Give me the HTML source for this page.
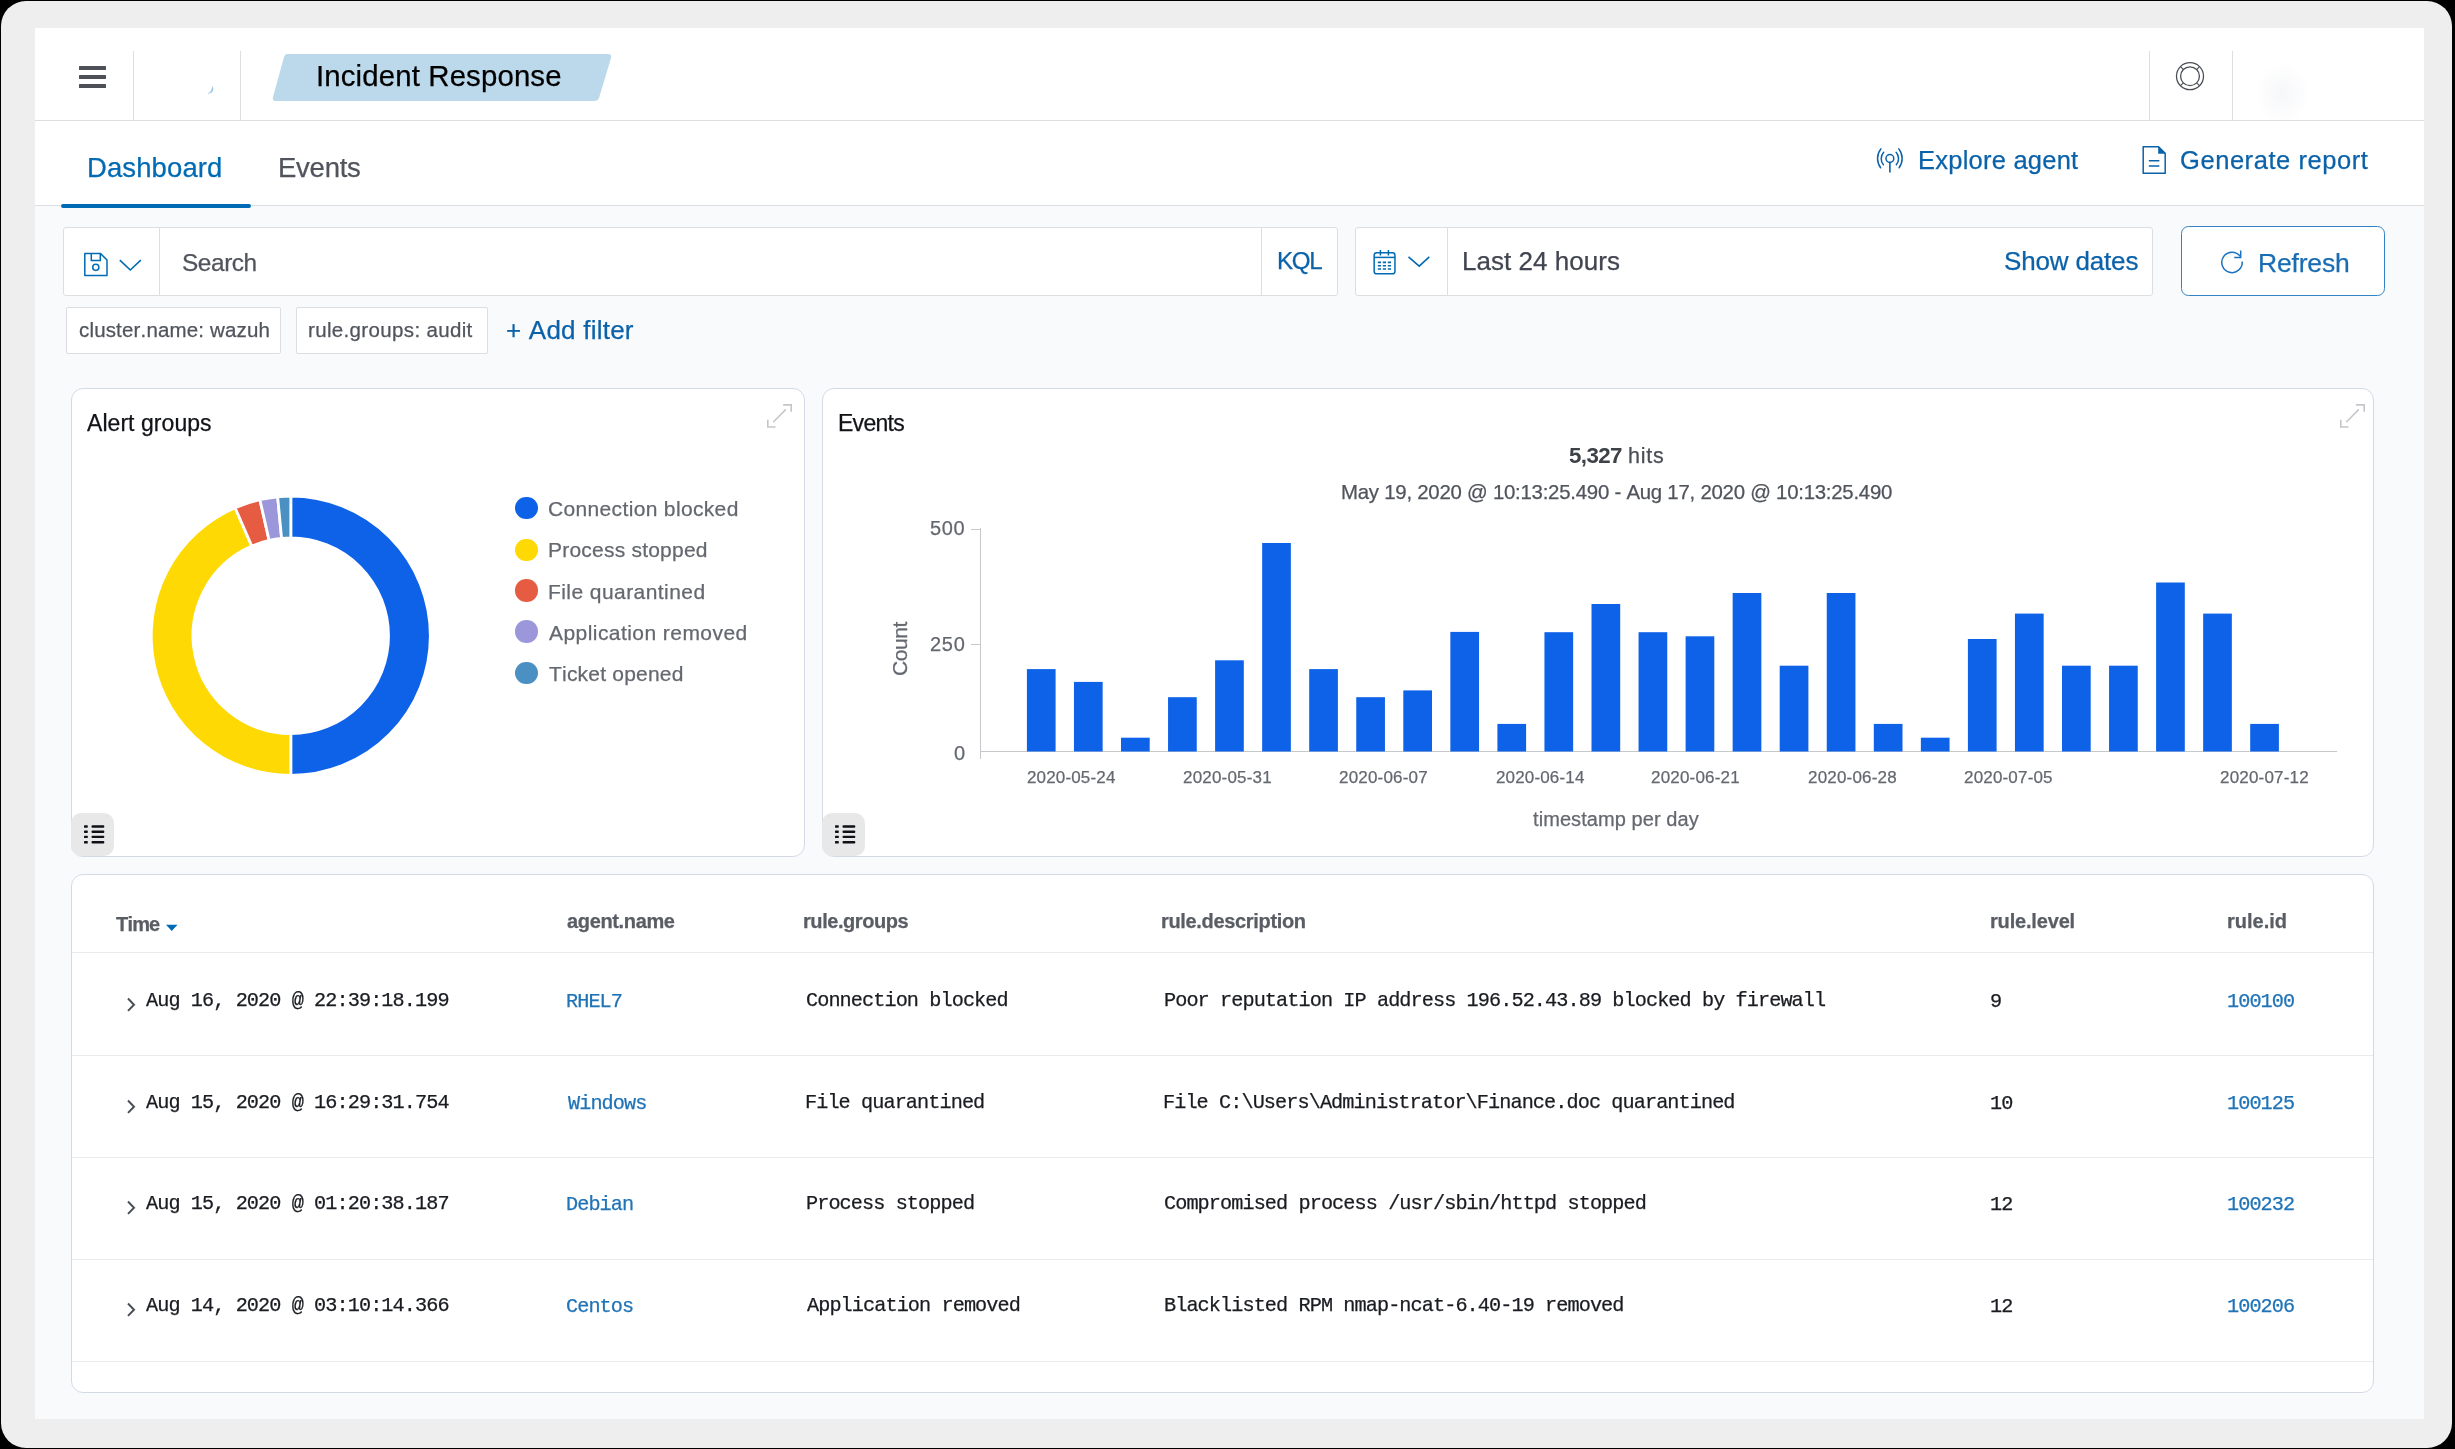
<!DOCTYPE html>
<html><head><meta charset="utf-8"><title>Wazuh - Incident Response</title><style>
html,body{margin:0;padding:0;}
body{width:2455px;height:1449px;overflow:hidden;background:#000;position:relative;
font-family:"Liberation Sans", sans-serif;font-kerning:none;}
.b{position:absolute;}
.t{position:absolute;white-space:pre;line-height:1;font-kerning:none;will-change:transform;-webkit-text-stroke:0.25px currentColor;}
.m{font-family:"Liberation Mono", monospace;font-size:20.20px;letter-spacing:-0.907px;}
svg.b{overflow:visible;}
</style></head><body>
<div class="b" style="left:1px;top:1px;width:2451px;height:1447px;background:#eeeeee;border-radius:25px;"></div>
<div class="b" style="left:35px;top:28px;width:2389px;height:1391px;background:#f9fafc;"></div>
<div class="b" style="left:35px;top:28px;width:2389px;height:178px;background:#fff;"></div>
<div class="b" style="left:35px;top:120px;width:2389px;height:1.2px;background:#dcdee1;"></div>
<div class="b" style="left:35px;top:204.6px;width:2389px;height:1.4px;background:#dcdee1;"></div>
<div class="b" style="left:132.6px;top:51px;width:1.1px;height:70px;background:#dcdee1;"></div>
<div class="b" style="left:239.6px;top:51px;width:1.1px;height:70px;background:#dcdee1;"></div>
<div class="b" style="left:2149px;top:51px;width:1.1px;height:70px;background:#dcdee1;"></div>
<div class="b" style="left:2231.6px;top:51px;width:1.1px;height:70px;background:#dcdee1;"></div>
<div class="b" style="left:2255px;top:62px;width:55px;height:58px;background:radial-gradient(ellipse at 50% 55%, rgba(236,238,242,0.45) 0%, rgba(244,245,248,0.3) 45%, rgba(255,255,255,0) 70%);"></div>
<svg class="b" style="left:204px;top:84px" width="12" height="12" viewBox="0 0 12 12"><path d="M8.3,1.8 Q10.2,4.5 8.6,7.6 Q7,9.9 3.6,9.6 Q6.8,8.2 7.6,5.2 Q8.1,3.5 8.3,1.8 Z" fill="#9fc6e6"/></svg>
<div class="b" style="left:78.8px;top:66.3px;width:27.4px;height:3.7px;background:#4d5057;border-radius:0.5px;"></div>
<div class="b" style="left:78.8px;top:75.0px;width:27.4px;height:3.7px;background:#4d5057;border-radius:0.5px;"></div>
<div class="b" style="left:78.8px;top:84.1px;width:27.4px;height:3.7px;background:#4d5057;border-radius:0.5px;"></div>
<svg class="b" style="left:0;top:0" width="700" height="130"><path d="M287,54 L608,54 Q612,54 611,58 L599,98 Q598,101 594,101 L276,101 Q272,101 273,97 L284,57 Q285,54 287,54 Z" fill="#bcd9ec"/></svg>
<div class="t" style="left:316.49px;top:61.41px;font-size:29.40px;color:#000;letter-spacing:0.131px;">Incident Response</div>
<svg class="b" style="left:2170px;top:56px" width="40" height="40" viewBox="0 0 40 40"><circle cx="20" cy="20.2" r="13.5" fill="none" stroke="#4a4e56" stroke-width="1.3"/><circle cx="20" cy="20.2" r="9.4" fill="none" stroke="#4a4e56" stroke-width="1.3"/><path d="M13.4,13.6 L10.5,10.7 M26.6,13.6 L29.5,10.7 M13.4,26.8 L10.5,29.7 M26.6,26.8 L29.5,29.7" stroke="#4a4e56" stroke-width="1.1"/></svg>
<div class="t" style="left:87.24px;top:153.52px;font-size:27.50px;color:#006bb4;letter-spacing:0.099px;">Dashboard</div>
<div class="t" style="left:277.54px;top:153.52px;font-size:27.50px;color:#50545c;letter-spacing:-0.244px;">Events</div>
<div class="b" style="left:61px;top:203.5px;width:190px;height:4px;background:#006bb4;border-radius:2px;"></div>
<svg class="b" style="left:1870px;top:140px" width="40" height="40" viewBox="0 0 40 40"><circle cx="19.9" cy="18.5" r="3.9" fill="none" stroke="#0b62a9" stroke-width="1.5"/><path d="M19.9,22.4 L19.9,32" stroke="#0b62a9" stroke-width="1.6" stroke-linecap="round"/><path d="M10.9,8.9 A15.4,15.4 0 0 0 10.6,27.7 M13.7,12.2 A9.5,9.5 0 0 0 13.4,24.7 M26.1,12.2 A9.5,9.5 0 0 1 26.3,24.7 M28.8,8.9 A15.4,15.4 0 0 1 29.1,27.7" fill="none" stroke="#0b62a9" stroke-width="1.5" stroke-linecap="round"/></svg>
<div class="t" style="left:1917.51px;top:148.21px;font-size:25.50px;color:#0b62a9;letter-spacing:0.235px;">Explore agent</div>
<svg class="b" style="left:2140px;top:144px" width="30" height="32" viewBox="0 0 30 32"><path d="M3.2,2.7 L18.5,2.7 L25.2,9.4 L25.2,29.3 L3.2,29.3 Z" fill="none" stroke="#0b62a9" stroke-width="1.5"/><path d="M18.2,2.5 L25.5,9.8 L18.2,9.8 Z" fill="#0b62a9"/><path d="M9.4,16.7 L18.8,16.7 M9.4,22.1 L18.8,22.1" stroke="#0b62a9" stroke-width="1.5" stroke-linecap="round"/></svg>
<div class="t" style="left:2180.42px;top:148.21px;font-size:25.50px;color:#0b62a9;letter-spacing:0.561px;">Generate report</div>
<div class="b" style="left:63px;top:227px;width:1275px;height:69px;background:#fff;border:1px solid #dcdee2;border-radius:3px;box-sizing:border-box;"></div>
<div class="b" style="left:159px;top:228px;width:1px;height:67px;background:#dcdee2;"></div>
<div class="b" style="left:1261px;top:228px;width:1px;height:67px;background:#dcdee2;"></div>
<svg class="b" style="left:80px;top:249px" width="32" height="32" viewBox="0 0 32 32"><path d="M4.8,4.6 L20.6,4.6 L27,11 L27,26.6 L4.8,26.6 Z" fill="none" stroke="#006bb4" stroke-width="1.5" stroke-linejoin="round"/><path d="M11.3,4.6 L11.3,11.5 L20.3,11.5 L20.3,4.6" fill="none" stroke="#006bb4" stroke-width="1.5"/><circle cx="15.8" cy="18.3" r="3.1" fill="none" stroke="#006bb4" stroke-width="1.5"/></svg>
<svg class="b" style="left:116px;top:256px" width="28" height="18" viewBox="0 0 28 18"><path d="M3.8,4.2 L14.3,14 L24.8,4.2" fill="none" stroke="#006bb4" stroke-width="1.6"/></svg>
<div class="t" style="left:181.79px;top:251.34px;font-size:24.40px;color:#50545c;letter-spacing:-0.424px;">Search</div>
<div class="t" style="left:1277.01px;top:249.31px;font-size:24.20px;color:#0b62a9;letter-spacing:-1.317px;">KQL</div>
<div class="b" style="left:1355px;top:227px;width:798px;height:69px;background:#fff;border:1px solid #dcdee2;border-radius:3px;box-sizing:border-box;"></div>
<div class="b" style="left:1447px;top:228px;width:1px;height:67px;background:#dcdee2;"></div>
<svg class="b" style="left:1370px;top:247px" width="30" height="32" viewBox="0 0 30 32"><rect x="4.15" y="5.75" width="20.8" height="21.1" rx="2.6" fill="none" stroke="#006bb4" stroke-width="1.5"/><path d="M4.15,10.4 L24.95,10.4" stroke="#006bb4" stroke-width="1.5"/><path d="M10.4,2.9 L10.4,8.5 M18.4,2.9 L18.4,8.5" stroke="#006bb4" stroke-width="1.5"/><path d="M7.8,15.4h3.2M12.8,15.4h3.2M17.8,15.4h3.2M7.8,18.8h3.2M12.8,18.8h3.2M17.8,18.8h3.2M7.8,22h3.2M12.8,22h3.2M17.8,22h3.2" stroke="#006bb4" stroke-width="1.6"/></svg>
<svg class="b" style="left:1404px;top:252px" width="30" height="20" viewBox="0 0 30 20"><path d="M4.5,4.8 L15.2,14.1 L25.3,4.8" fill="none" stroke="#006bb4" stroke-width="1.6"/></svg>
<div class="t" style="left:1462.47px;top:248.49px;font-size:26.00px;color:#404550;letter-spacing:0.044px;">Last 24 hours</div>
<div class="t" style="left:2003.52px;top:248.19px;font-size:26.00px;color:#0b62a9;letter-spacing:-0.161px;">Show dates</div>
<div class="b" style="left:2181px;top:226.3px;width:204px;height:70px;background:#fff;border:1.7px solid #3383c4;border-radius:7.5px;box-sizing:border-box;"></div>
<svg class="b" style="left:2210px;top:240px" width="40" height="40" viewBox="0 0 40 40"><path d="M32.16,21.51 A10.2,10.2 0 1 1 30.25,16.4" fill="none" stroke="#1c72bd" stroke-width="1.5"/><path d="M30.7,10.6 L30.7,17.4 L24.2,17.4" fill="none" stroke="#1c72bd" stroke-width="1.5"/></svg>
<div class="t" style="left:2258.23px;top:249.66px;font-size:26.50px;color:#1a6db3;letter-spacing:-0.182px;">Refresh</div>
<div class="b" style="left:65.5px;top:307.3px;width:215.1px;height:46.5px;background:#fff;border:1px solid #dcdee2;border-radius:2px;box-sizing:border-box;"></div>
<div class="t" style="left:78.73px;top:319.94px;font-size:20.50px;color:#50545c;letter-spacing:0.167px;">cluster.name: wazuh</div>
<div class="b" style="left:295.6px;top:307.3px;width:192.2px;height:46.5px;background:#fff;border:1px solid #dcdee2;border-radius:2px;box-sizing:border-box;"></div>
<div class="t" style="left:307.84px;top:320.44px;font-size:20.50px;color:#50545c;letter-spacing:0.347px;">rule.groups: audit</div>
<div class="t" style="left:506.23px;top:317.29px;font-size:26.00px;color:#0b62a9;letter-spacing:0.226px;">+ Add filter</div>
<div class="b" style="left:71px;top:388px;width:734px;height:469px;background:#fff;border:1.5px solid #d3dae6;border-radius:12px;box-sizing:border-box;"></div>
<div class="t" style="left:87.26px;top:412.03px;font-size:23.00px;color:#111318;letter-spacing:0.052px;">Alert groups</div>
<svg class="b" style="left:755px;top:395px" width="40" height="40" viewBox="0 0 40 40"><path d="M28.1,9.9 H36.2 V16.8 M12.8,24.8 V32.05 H20.5" fill="none" stroke="#c4c6ca" stroke-width="1.6"/><path d="M18.6,26.7 L30.4,14.9" fill="none" stroke="#c4c6ca" stroke-width="1.5" stroke-linecap="round"/></svg>
<div class="b" style="left:70.8px;top:813px;width:43.2px;height:43.3px;background:#e8e8e9;border-radius:10px;"></div>
<svg class="b" style="left:70.8px;top:813px" width="43" height="43" viewBox="0 0 43 43"><rect x="13" y="12.30" width="3.8" height="2.4" rx="0.6" fill="#0e1116"/><rect x="20.5" y="12.30" width="12.8" height="2.4" rx="1" fill="#0e1116"/><rect x="13" y="17.50" width="3.8" height="2.4" rx="0.6" fill="#0e1116"/><rect x="20.5" y="17.50" width="12.8" height="2.4" rx="1" fill="#0e1116"/><rect x="13" y="22.70" width="3.8" height="2.4" rx="0.6" fill="#0e1116"/><rect x="20.5" y="22.70" width="12.8" height="2.4" rx="1" fill="#0e1116"/><rect x="13" y="28.10" width="3.8" height="2.4" rx="0.6" fill="#0e1116"/><rect x="20.5" y="28.10" width="12.8" height="2.4" rx="1" fill="#0e1116"/></svg>
<svg class="b" style="left:0;top:0" width="820" height="860"><path d="M290.80,496.20 A139.60,139.60 0 0 1 290.80,775.40 L290.80,733.60 A97.80,97.80 0 0 0 290.80,538.00 Z" fill="#0e62e8" stroke="#fff" stroke-width="2.8"/><path d="M290.80,775.40 A139.60,139.60 0 0 1 235.13,507.78 L251.80,546.11 A97.80,97.80 0 0 0 290.80,733.60 Z" fill="#fed903" stroke="#fff" stroke-width="2.8"/><path d="M235.13,507.78 A139.60,139.60 0 0 1 259.87,499.67 L269.13,540.43 A97.80,97.80 0 0 0 251.80,546.11 Z" fill="#e65c42" stroke="#fff" stroke-width="2.8"/><path d="M259.87,499.67 A139.60,139.60 0 0 1 277.66,496.82 L281.60,538.43 A97.80,97.80 0 0 0 269.13,540.43 Z" fill="#9c96db" stroke="#fff" stroke-width="2.8"/><path d="M277.66,496.82 A139.60,139.60 0 0 1 290.80,496.20 L290.80,538.00 A97.80,97.80 0 0 0 281.60,538.43 Z" fill="#4b90c2" stroke="#fff" stroke-width="2.8"/></svg>
<div class="b" style="left:515.4000000000001px;top:496.9px;width:22.6px;height:22.6px;background:#0e62e8;border-radius:50%;"></div>
<div class="t" style="left:548.33px;top:498.12px;font-size:21.00px;color:#64686f;letter-spacing:0.345px;">Connection blocked</div>
<div class="b" style="left:515.4000000000001px;top:538.5px;width:22.6px;height:22.6px;background:#fed903;border-radius:50%;"></div>
<div class="t" style="left:547.68px;top:539.42px;font-size:21.00px;color:#64686f;letter-spacing:0.218px;">Process stopped</div>
<div class="b" style="left:515.4000000000001px;top:579.4000000000001px;width:22.6px;height:22.6px;background:#e65c42;border-radius:50%;"></div>
<div class="t" style="left:547.68px;top:580.52px;font-size:21.00px;color:#64686f;letter-spacing:0.432px;">File quarantined</div>
<div class="b" style="left:515.4000000000001px;top:620.2px;width:22.6px;height:22.6px;background:#9c96db;border-radius:50%;"></div>
<div class="t" style="left:549.36px;top:621.72px;font-size:21.00px;color:#64686f;letter-spacing:0.440px;">Application removed</div>
<div class="b" style="left:515.4000000000001px;top:661.6px;width:22.6px;height:22.6px;background:#4b90c2;border-radius:50%;"></div>
<div class="t" style="left:548.93px;top:662.62px;font-size:21.00px;color:#64686f;letter-spacing:0.209px;">Ticket opened</div>
<div class="b" style="left:822px;top:388px;width:1552px;height:469px;background:#fff;border:1.5px solid #d3dae6;border-radius:12px;box-sizing:border-box;"></div>
<div class="t" style="left:838.41px;top:411.93px;font-size:23.00px;color:#111318;letter-spacing:-0.719px;">Events</div>
<svg class="b" style="left:2327.9px;top:395px" width="40" height="40" viewBox="0 0 40 40"><path d="M28.1,9.9 H36.2 V16.8 M12.8,24.8 V32.05 H20.5" fill="none" stroke="#c4c6ca" stroke-width="1.6"/><path d="M18.6,26.7 L30.4,14.9" fill="none" stroke="#c4c6ca" stroke-width="1.5" stroke-linecap="round"/></svg>
<div class="b" style="left:821.8px;top:813px;width:43.2px;height:43.3px;background:#e8e8e9;border-radius:10px;"></div>
<svg class="b" style="left:821.8px;top:813px" width="43" height="43" viewBox="0 0 43 43"><rect x="13" y="12.30" width="3.8" height="2.4" rx="0.6" fill="#0e1116"/><rect x="20.5" y="12.30" width="12.8" height="2.4" rx="1" fill="#0e1116"/><rect x="13" y="17.50" width="3.8" height="2.4" rx="0.6" fill="#0e1116"/><rect x="20.5" y="17.50" width="12.8" height="2.4" rx="1" fill="#0e1116"/><rect x="13" y="22.70" width="3.8" height="2.4" rx="0.6" fill="#0e1116"/><rect x="20.5" y="22.70" width="12.8" height="2.4" rx="1" fill="#0e1116"/><rect x="13" y="28.10" width="3.8" height="2.4" rx="0.6" fill="#0e1116"/><rect x="20.5" y="28.10" width="12.8" height="2.4" rx="1" fill="#0e1116"/></svg>
<div class="t" style="left:1568.91px;top:445.12px;font-size:22.30px;color:#3d4148;font-weight:700;letter-spacing:-0.585px;-webkit-text-stroke:0;">5,327</div>
<div class="t" style="left:1627.81px;top:445.80px;font-size:21.50px;color:#4a4e56;letter-spacing:0.737px;">hits</div>
<div class="t" style="left:1340.53px;top:482.03px;font-size:20.40px;color:#50545c;letter-spacing:-0.246px;">May 19, 2020 @ 10:13:25.490 - Aug 17, 2020 @ 10:13:25.490</div>
<div class="b" style="left:979.5px;top:528.4px;width:1.3px;height:231px;background:#c6c8cc;"></div>
<div class="b" style="left:981px;top:750.8px;width:1356px;height:1.6px;background:#c6c8cc;"></div>
<div class="b" style="left:971px;top:528.5px;width:9px;height:1.3px;background:#c6c8cc;"></div>
<div class="b" style="left:971px;top:643.5px;width:9px;height:1.3px;background:#c6c8cc;"></div>
<div class="t" style="left:930.20px;top:518.07px;font-size:20.00px;color:#64686f;letter-spacing:0.606px;">500</div>
<div class="t" style="left:929.99px;top:634.07px;font-size:20.00px;color:#64686f;letter-spacing:0.709px;">250</div>
<div class="t" style="left:953.72px;top:743.07px;font-size:20.00px;color:#64686f;">0</div>
<div class="t" style="left:889.22px;top:676.07px;font-size:21.00px;color:#64686f;transform:rotate(-90deg);transform-origin:0 0;letter-spacing:-0.454px;">Count</div>
<svg class="b" style="left:0;top:0" width="2400" height="860"><rect x="1026.90" y="669.10" width="28.7" height="82.40" fill="#0e62e8"/><rect x="1073.95" y="681.90" width="28.7" height="69.60" fill="#0e62e8"/><rect x="1121.00" y="737.70" width="28.7" height="13.80" fill="#0e62e8"/><rect x="1168.05" y="697.20" width="28.7" height="54.30" fill="#0e62e8"/><rect x="1215.10" y="660.30" width="28.7" height="91.20" fill="#0e62e8"/><rect x="1262.15" y="543.00" width="28.7" height="208.50" fill="#0e62e8"/><rect x="1309.20" y="669.10" width="28.7" height="82.40" fill="#0e62e8"/><rect x="1356.25" y="697.20" width="28.7" height="54.30" fill="#0e62e8"/><rect x="1403.30" y="690.40" width="28.7" height="61.10" fill="#0e62e8"/><rect x="1450.35" y="631.90" width="28.7" height="119.60" fill="#0e62e8"/><rect x="1497.40" y="723.90" width="28.7" height="27.60" fill="#0e62e8"/><rect x="1544.45" y="632.20" width="28.7" height="119.30" fill="#0e62e8"/><rect x="1591.50" y="604.00" width="28.7" height="147.50" fill="#0e62e8"/><rect x="1638.55" y="632.20" width="28.7" height="119.30" fill="#0e62e8"/><rect x="1685.60" y="636.30" width="28.7" height="115.20" fill="#0e62e8"/><rect x="1732.65" y="593.00" width="28.7" height="158.50" fill="#0e62e8"/><rect x="1779.70" y="665.70" width="28.7" height="85.80" fill="#0e62e8"/><rect x="1826.75" y="593.00" width="28.7" height="158.50" fill="#0e62e8"/><rect x="1873.80" y="723.90" width="28.7" height="27.60" fill="#0e62e8"/><rect x="1920.85" y="737.70" width="28.7" height="13.80" fill="#0e62e8"/><rect x="1967.90" y="639.00" width="28.7" height="112.50" fill="#0e62e8"/><rect x="2014.95" y="613.60" width="28.7" height="137.90" fill="#0e62e8"/><rect x="2062.00" y="665.70" width="28.7" height="85.80" fill="#0e62e8"/><rect x="2109.05" y="665.70" width="28.7" height="85.80" fill="#0e62e8"/><rect x="2156.10" y="582.50" width="28.7" height="169.00" fill="#0e62e8"/><rect x="2203.15" y="613.60" width="28.7" height="137.90" fill="#0e62e8"/><rect x="2250.20" y="723.90" width="28.7" height="27.60" fill="#0e62e8"/></svg>
<div class="t" style="left:1026.85px;top:768.61px;font-size:17.00px;color:#64686f;letter-spacing:0.155px;">2020-05-24</div>
<div class="t" style="left:1182.75px;top:768.61px;font-size:17.00px;color:#64686f;letter-spacing:0.192px;">2020-05-31</div>
<div class="t" style="left:1339.45px;top:768.61px;font-size:17.00px;color:#64686f;letter-spacing:0.195px;">2020-06-07</div>
<div class="t" style="left:1495.65px;top:768.61px;font-size:17.00px;color:#64686f;letter-spacing:0.155px;">2020-06-14</div>
<div class="t" style="left:1651.35px;top:768.61px;font-size:17.00px;color:#64686f;letter-spacing:0.192px;">2020-06-21</div>
<div class="t" style="left:1808.05px;top:768.61px;font-size:17.00px;color:#64686f;letter-spacing:0.182px;">2020-06-28</div>
<div class="t" style="left:1964.45px;top:768.61px;font-size:17.00px;color:#64686f;letter-spacing:0.179px;">2020-07-05</div>
<div class="t" style="left:2220.35px;top:768.61px;font-size:17.00px;color:#64686f;letter-spacing:0.195px;">2020-07-12</div>
<div class="t" style="left:1533.10px;top:809.27px;font-size:20.00px;color:#64686f;letter-spacing:0.077px;">timestamp per day</div>
<div class="b" style="left:71px;top:874px;width:2303px;height:518.8px;background:#fff;border:1.5px solid #d3dae6;border-radius:12px;box-sizing:border-box;"></div>
<div class="t" style="left:115.88px;top:913.67px;font-size:20.00px;color:#595d64;font-weight:700;letter-spacing:-0.824px;">Time</div>
<svg class="b" style="left:164px;top:922px" width="16" height="12" viewBox="0 0 16 12"><path d="M2,2.8 L13.5,2.8 L7.75,8.9 Z" fill="#006bb4"/></svg>
<div class="t" style="left:566.51px;top:910.77px;font-size:20.00px;color:#595d64;font-weight:700;letter-spacing:-0.353px;">agent.name</div>
<div class="t" style="left:803.18px;top:910.77px;font-size:20.00px;color:#595d64;font-weight:700;letter-spacing:-0.437px;">rule.groups</div>
<div class="t" style="left:1161.38px;top:910.77px;font-size:20.00px;color:#595d64;font-weight:700;letter-spacing:-0.331px;">rule.description</div>
<div class="t" style="left:1990.28px;top:910.77px;font-size:20.00px;color:#595d64;font-weight:700;letter-spacing:-0.176px;">rule.level</div>
<div class="t" style="left:2226.68px;top:910.77px;font-size:20.00px;color:#595d64;font-weight:700;">rule.id</div>
<div class="b" style="left:72px;top:952px;width:2301px;height:1.3px;background:#e8eaed;"></div>
<svg class="b" style="left:122px;top:994.00px" width="18" height="20" viewBox="0 0 18 20"><path d="M6,4.5 L12,10.7 L6,16.9" fill="none" stroke="#4a4e56" stroke-width="2"/></svg>
<div class="t m" style="left:146.20px;top:991.02px;color:#1a1c21;">Aug 16, 2020 @ 22:39:18.199</div>
<div class="t m" style="left:566.00px;top:992.02px;color:#1f73b7;">RHEL7</div>
<div class="t m" style="left:805.99px;top:991.02px;color:#1a1c21;">Connection blocked</div>
<div class="t m" style="left:1163.70px;top:991.02px;color:#1a1c21;">Poor reputation IP address 196.52.43.89 blocked by firewall</div>
<div class="t m" style="left:1990.21px;top:992.02px;color:#1a1c21;">9</div>
<div class="t m" style="left:2226.54px;top:992.02px;color:#1f73b7;">100100</div>
<div class="b" style="left:72px;top:1054.5px;width:2301px;height:1.3px;background:#e8eaed;"></div>
<svg class="b" style="left:122px;top:1095.60px" width="18" height="20" viewBox="0 0 18 20"><path d="M6,4.5 L12,10.7 L6,16.9" fill="none" stroke="#4a4e56" stroke-width="2"/></svg>
<div class="t m" style="left:146.20px;top:1092.62px;color:#1a1c21;">Aug 15, 2020 @ 16:29:31.754</div>
<div class="t m" style="left:567.60px;top:1093.62px;color:#1f73b7;">Windows</div>
<div class="t m" style="left:805.19px;top:1092.62px;color:#1a1c21;">File quarantined</div>
<div class="t m" style="left:1163.39px;top:1092.62px;color:#1a1c21;">File C:\Users\Administrator\Finance.doc quarantined</div>
<div class="t m" style="left:1990.14px;top:1093.62px;color:#1a1c21;">10</div>
<div class="t m" style="left:2226.54px;top:1093.62px;color:#1f73b7;">100125</div>
<div class="b" style="left:72px;top:1156.7px;width:2301px;height:1.3px;background:#e8eaed;"></div>
<svg class="b" style="left:122px;top:1197.20px" width="18" height="20" viewBox="0 0 18 20"><path d="M6,4.5 L12,10.7 L6,16.9" fill="none" stroke="#4a4e56" stroke-width="2"/></svg>
<div class="t m" style="left:146.20px;top:1194.22px;color:#1a1c21;">Aug 15, 2020 @ 01:20:38.187</div>
<div class="t m" style="left:566.00px;top:1195.22px;color:#1f73b7;">Debian</div>
<div class="t m" style="left:805.50px;top:1194.22px;color:#1a1c21;">Process stopped</div>
<div class="t m" style="left:1164.19px;top:1194.22px;color:#1a1c21;">Compromised process /usr/sbin/httpd stopped</div>
<div class="t m" style="left:1990.14px;top:1195.22px;color:#1a1c21;">12</div>
<div class="t m" style="left:2226.54px;top:1195.22px;color:#1f73b7;">100232</div>
<div class="b" style="left:72px;top:1258.9px;width:2301px;height:1.3px;background:#e8eaed;"></div>
<svg class="b" style="left:122px;top:1298.80px" width="18" height="20" viewBox="0 0 18 20"><path d="M6,4.5 L12,10.7 L6,16.9" fill="none" stroke="#4a4e56" stroke-width="2"/></svg>
<div class="t m" style="left:146.20px;top:1295.82px;color:#1a1c21;">Aug 14, 2020 @ 03:10:14.366</div>
<div class="t m" style="left:566.49px;top:1296.82px;color:#1f73b7;">Centos</div>
<div class="t m" style="left:807.10px;top:1295.82px;color:#1a1c21;">Application removed</div>
<div class="t m" style="left:1163.70px;top:1295.82px;color:#1a1c21;">Blacklisted RPM nmap-ncat-6.40-19 removed</div>
<div class="t m" style="left:1990.14px;top:1296.82px;color:#1a1c21;">12</div>
<div class="t m" style="left:2226.54px;top:1296.82px;color:#1f73b7;">100206</div>
<div class="b" style="left:72px;top:1361.1px;width:2301px;height:1.3px;background:#e8eaed;"></div>
</body></html>
